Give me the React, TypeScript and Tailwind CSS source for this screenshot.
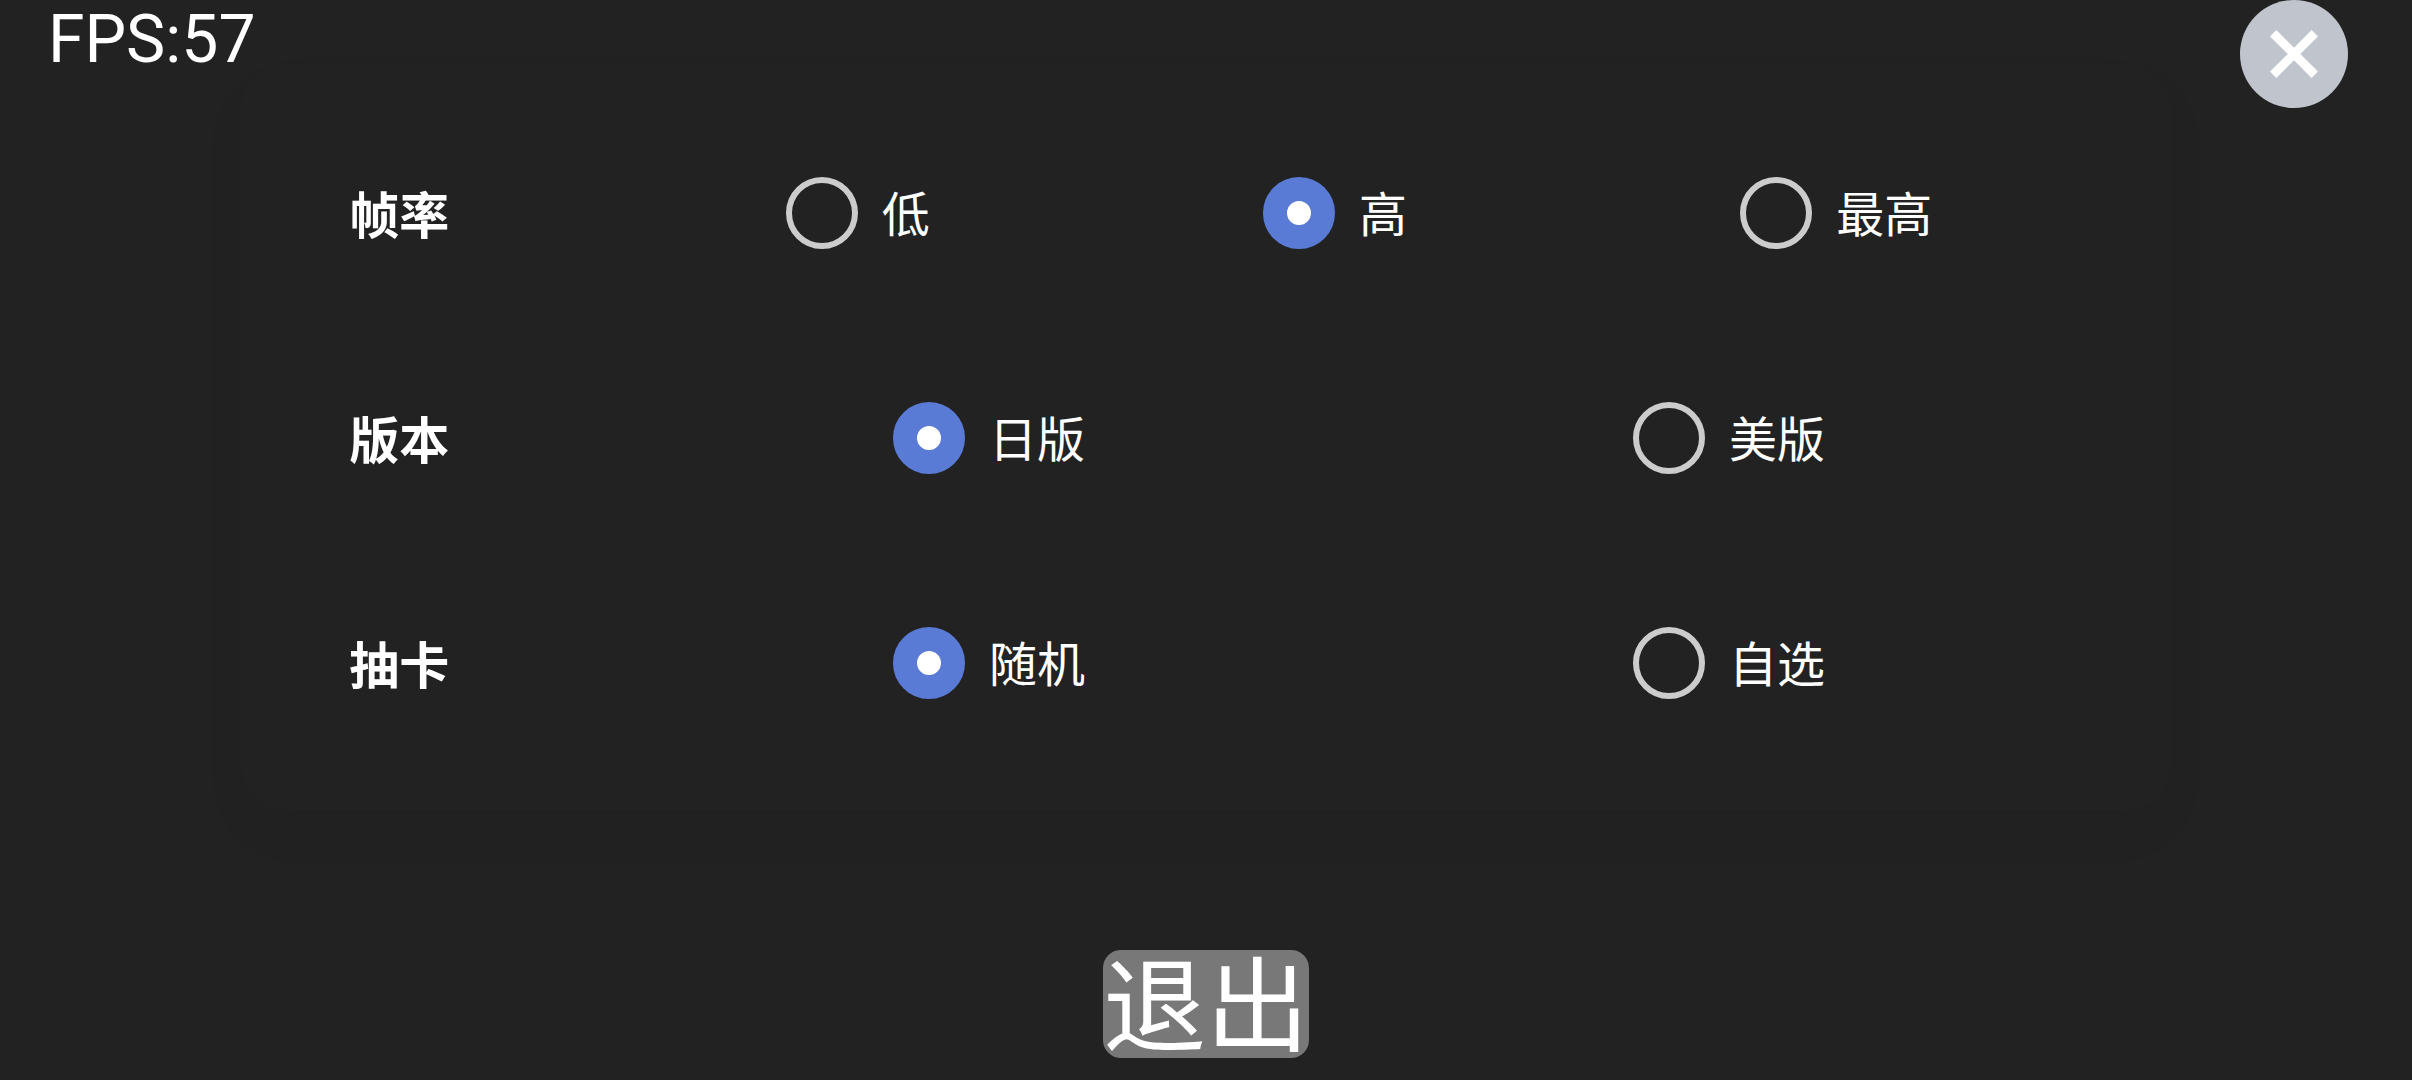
import { useState } from "react";

interface Setting {
  id: string;
  label: string;
  options: string[];
  initial: string;
}

const settings: Setting[] = [
  { id: "fps", label: "帧率", options: ["低", "高", "最高"], initial: "高" },
  { id: "version", label: "版本", options: ["日版", "美版"], initial: "日版" },
  { id: "draw", label: "抽卡", options: ["随机", "自选"], initial: "随机" },
];

function SettingRow({ setting }: { setting: Setting }) {
  const [value, setValue] = useState(setting.initial);

  return (
    <div role="radiogroup" aria-labelledby={`${setting.id}-label`} className="flex h-[225px] items-center">
      <div id={`${setting.id}-label`} className="w-[270px] shrink-0 pb-0.5 text-[50px] leading-[72px] font-bold">
        {setting.label}
      </div>
      <div className="flex flex-1 items-center justify-around">
        {setting.options.map((option) => (
          <label key={option} className="flex cursor-pointer items-center gap-6 text-[48px] leading-[68px]">
            <input
              type="radio"
              name={setting.id}
              value={option}
              checked={value === option}
              onChange={() => setValue(option)}
              className="size-18 shrink-0 appearance-none rounded-full border-6 border-[#cccccc] checked:border-24 checked:border-[#5a7bd5] checked:bg-white"
            />
            <span className="pb-1">{option}</span>
          </label>
        ))}
      </div>
    </div>
  );
}

export default function App() {
  return (
    <div className="flex min-h-screen flex-col bg-[#222222] font-['Noto_Sans_CJK_SC',sans-serif] text-white">
      <header className="flex h-16 items-start justify-between pr-16 pl-12">
        <div className="font-['Roboto',sans-serif] text-[66px] leading-[80px]">FPS:57</div>
        <button
          type="button"
          aria-label="关闭"
          className="flex size-27 shrink-0 items-center justify-center rounded-full bg-[#c0c4cc]"
        >
          <svg viewBox="0 0 48 48" className="size-12" stroke="currentColor" strokeWidth="9" fill="none">
            <path d="M3.2 3.2 44.8 44.8M44.8 3.2 3.2 44.8" />
          </svg>
        </button>
      </header>

      <main className="mx-auto w-4/5 rounded-[48px] py-9 pr-18 pl-27 shadow-[0_24px_48px_rgba(0,0,0,0.04)]">
        {settings.map((setting) => (
          <SettingRow key={setting.id} setting={setting} />
        ))}
      </main>

      <footer className="flex flex-1 items-end justify-center pb-[22px]">
        <button type="button" className="h-27 rounded-[18px] bg-[#787878] pb-2 text-[103px] leading-[100px]">
          退出
        </button>
      </footer>
    </div>
  );
}
